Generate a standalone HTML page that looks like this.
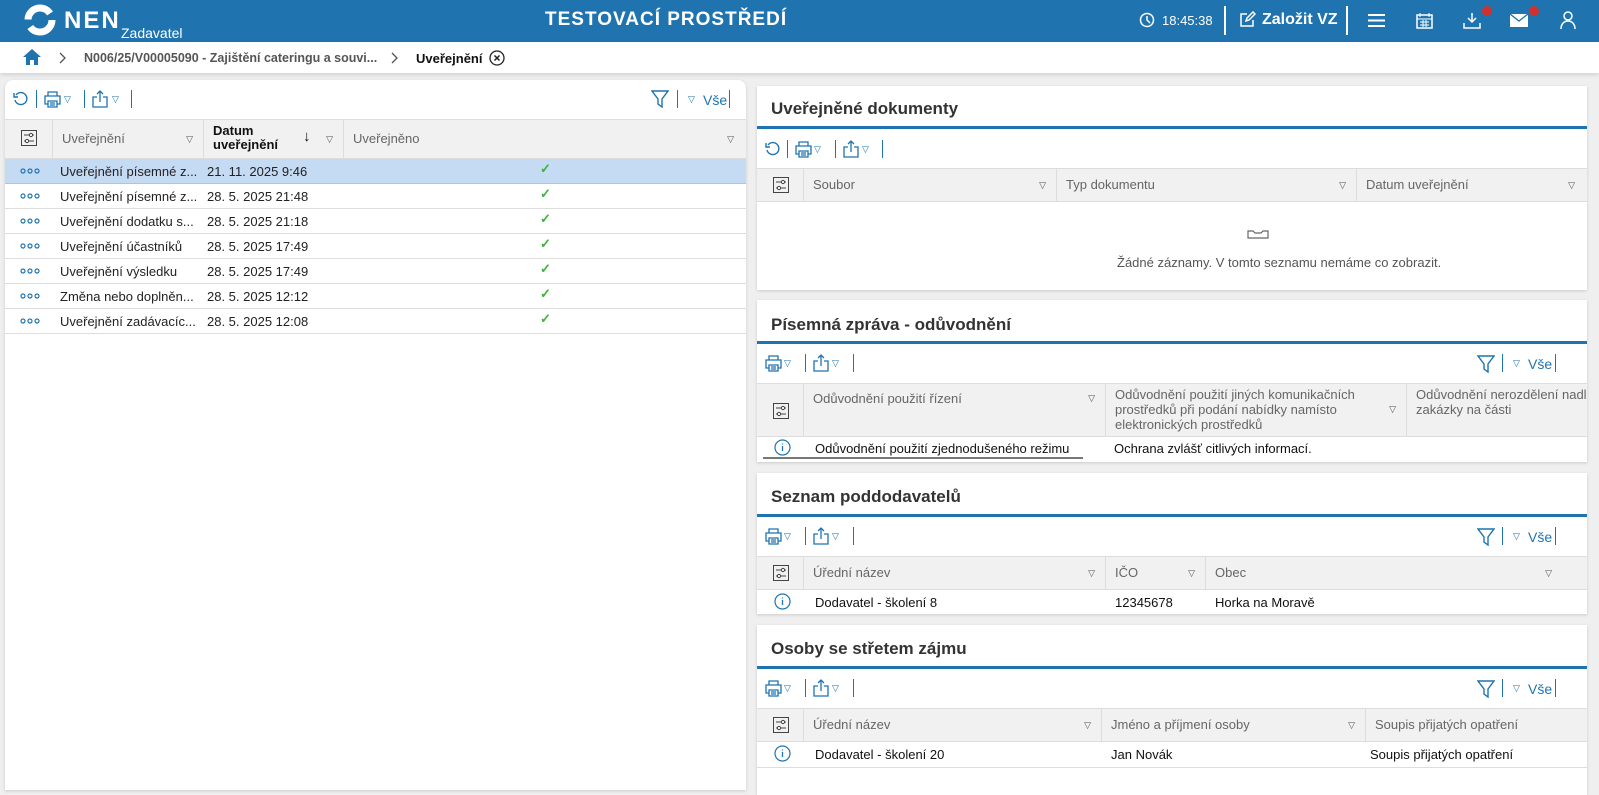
<!DOCTYPE html>
<html><head><meta charset="utf-8">
<style>
*{box-sizing:border-box;margin:0;padding:0}
body{width:1599px;height:784px;overflow:hidden;background:#efefef;font-family:"Liberation Sans",Arial,sans-serif;font-size:13px;color:#222;position:relative}
.a{position:absolute}
.hdr{left:0;top:0;width:1599px;height:42px;background:#1f74b0;color:#fff}
.bc{left:0;top:42px;width:1599px;height:31px;background:#fff;box-shadow:0 2px 4px rgba(0,0,0,.12)}
.panel{background:#fff;box-shadow:0 1px 3px rgba(0,0,0,.15)}
.th{background:#f1f1f1;border-top:1px solid #ddd;border-bottom:1px solid #ddd;color:#666}
.th .c{position:absolute;top:0;bottom:0;border-left:1px solid #ddd;padding-left:9px}
.tri{position:absolute;font-size:9px;color:#555}
.row{border-bottom:1px solid #ddd}
.blue{color:#1f74b0}
.ttl{font-size:17px;font-weight:bold;color:#333}
.bl{height:3px;background:#1f74b0}
.sep{position:absolute;width:1px;height:18px;background:#1f74b0}
.dots{position:absolute;left:15px;top:9px;width:20px;height:6px}
.chk{position:absolute;left:535px;top:2px;color:#3bb33b;font-weight:bold}
</style></head><body>

<div class="a hdr">
 <svg class="a" style="left:24px;top:4px" width="32" height="32" viewBox="0 0 32 32"><circle cx="16" cy="16" r="12" fill="none" stroke="#fff" stroke-width="7" stroke-dasharray="30 8"/></svg>
 <div class="a" style="left:64px;top:7px;font-size:24px;font-weight:bold;letter-spacing:2px">NEN</div>
 <div class="a" style="left:121px;top:25px;font-size:14px">Zadavatel</div>
 <div class="a" style="left:545px;top:9px;font-size:19px;font-weight:bold;letter-spacing:1px">TESTOVACÍ PROSTŘEDÍ</div>
 <svg class="a" style="left:1139px;top:12px" width="16" height="16" viewBox="0 0 16 16"><circle cx="8" cy="8" r="6.5" fill="none" stroke="#fff" stroke-width="1.5"/><path d="M8 4v4l3 3" stroke="#fff" stroke-width="1.5" fill="none"/></svg>
 <div class="a" style="left:1162px;top:13px;font-size:13px">18:45:38</div>
 <div class="a" style="left:1224px;top:6px;width:2px;height:29px;background:#fff"></div>
 <svg class="a" style="left:1238px;top:11px" width="18" height="18" viewBox="0 0 18 18"><path d="M9 3H3v12h12V9M8 10l1-3 6-6 2 2-6 6z" stroke="#fff" stroke-width="1.5" fill="none"/></svg>
 <div class="a" style="left:1262px;top:11px;font-size:16px;font-weight:bold">Založit VZ</div>
 <div class="a" style="left:1346px;top:6px;width:2px;height:29px;background:#fff"></div>
 <svg class="a" style="left:1368px;top:13px" width="17" height="15"><path d="M0 2h17M0 7.5h17M0 13h17" stroke="#fff" stroke-width="2"/></svg>
 <svg class="a" style="left:1416px;top:12px" width="17" height="17" viewBox="0 0 17 17"><rect x="1" y="3" width="15" height="13" fill="none" stroke="#fff" stroke-width="1.5"/><path d="M4 1v4M13 1v4M1 7h15M4 10h9M4 13h9M7 8v7M10 8v7" stroke="#fff" stroke-width="1"/></svg>
 <svg class="a" style="left:1463px;top:12px" width="18" height="17" viewBox="0 0 18 17"><path d="M9 1v9M5 6l4 4 4-4M1 11v5h16v-5" stroke="#fff" stroke-width="1.5" fill="none"/></svg>
 <div class="a" style="left:1482px;top:6px;width:10px;height:10px;border-radius:50%;background:#d0312d"></div>
 <svg class="a" style="left:1510px;top:14px" width="18" height="13" viewBox="0 0 18 13"><rect width="18" height="13" fill="#fff"/><path d="M0 0l9 7 9-7" stroke="#1f74b0" stroke-width="1.3" fill="none"/></svg>
 <div class="a" style="left:1529px;top:6px;width:10px;height:10px;border-radius:50%;background:#d0312d"></div>
 <svg class="a" style="left:1560px;top:11px" width="16" height="18" viewBox="0 0 16 18"><circle cx="8" cy="5" r="4" fill="none" stroke="#fff" stroke-width="1.5"/><path d="M1 18c0-5 3-8 7-8s7 3 7 8" fill="none" stroke="#fff" stroke-width="1.5"/></svg>
</div>

<div class="a bc">
 <svg class="a" style="left:23px;top:7px" width="18" height="16" viewBox="0 0 18 16"><path d="M9 0L0 8h3v8h4v-5h4v5h4V8h3z" fill="#1f74b0"/></svg>
 <svg class="a" style="left:59px;top:10px" width="8" height="12"><path d="M1 1l5 5-5 5" stroke="#555" fill="none" stroke-width="1.3"/></svg>
 <div class="a" style="left:84px;top:9px;font-weight:bold;color:#555;font-size:12.5px">N006/25/V00005090 - Zajištění cateringu a souvi...</div>
 <svg class="a" style="left:391px;top:10px" width="8" height="12"><path d="M1 1l5 5-5 5" stroke="#555" fill="none" stroke-width="1.3"/></svg>
 <div class="a" style="left:416px;top:9px;font-weight:bold;color:#111">Uveřejnění</div>
 <svg class="a" style="left:489px;top:8px" width="16" height="16" viewBox="0 0 16 16"><circle cx="8" cy="8" r="7" fill="none" stroke="#222" stroke-width="1.3"/><path d="M5.5 5.5l5 5M10.5 5.5l-5 5" stroke="#222" stroke-width="1.5"/></svg>
</div>

<!-- Left panel -->
<div class="a panel" style="left:5px;top:80px;width:741px;height:710px;border-radius:8px 8px 0 0">
 <svg class="a" style="left:8px;top:11px" width="16" height="16" viewBox="0 0 16 16"><path d="M3 4A6 6 0 1 1 2 9" fill="none" stroke="#1f74b0" stroke-width="1.4"/><path d="M1 2v4h4" fill="none" stroke="#1f74b0" stroke-width="1.4"/></svg>
 <div class="sep" style="left:31px;top:10px"></div>
 <svg class="a" style="left:39px;top:11px" width="17" height="17" viewBox="0 0 17 17"><path d="M4 5V1h9v4M4 13H1V5h15v8h-3M4 10h9v6H4zM6 12h5M6 14h5" fill="none" stroke="#1f74b0" stroke-width="1.3"/></svg>
 <span class="tri blue" style="left:59px;top:14px">▽</span>
 <div class="sep" style="left:79px;top:10px"></div>
 <svg class="a" style="left:87px;top:10px" width="16" height="18" viewBox="0 0 16 18"><path d="M5 7H1v10h14V7h-4M8 12V1M5 4l3-3 3 3" fill="none" stroke="#1f74b0" stroke-width="1.3"/></svg>
 <span class="tri blue" style="left:107px;top:14px">▽</span>
 <div class="sep" style="left:126px;top:10px"></div>
 <svg class="a" style="left:646px;top:10px" width="18" height="18" viewBox="0 0 18 18"><path d="M1 1h16l-6 8v8l-4-3V9z" fill="none" stroke="#1f74b0" stroke-width="1.4"/></svg>
 <div class="sep" style="left:672px;top:10px"></div>
 <span class="tri blue" style="left:683px;top:14px">▽</span>
 <div class="a blue" style="left:698px;top:12px;font-size:14px">Vše</div>
 <div class="sep" style="left:724px;top:10px"></div>

 <div class="a th" style="left:0;top:39px;width:741px;height:40px">
  <svg class="a" style="left:16px;top:10px" width="16" height="16" viewBox="0 0 16 16"><rect x=".5" y=".5" width="15" height="15" fill="none" stroke="#444"/><path d="M3 5h10M3 11h10" stroke="#444"/><circle cx="10" cy="5" r="1.6" fill="#fff" stroke="#444"/><circle cx="6" cy="11" r="1.6" fill="#fff" stroke="#444"/></svg>
  <div class="c" style="left:47px;width:151px;line-height:38px">Uveřejnění<span class="tri" style="right:10px;top:0">▽</span></div>
  <div class="c" style="left:198px;width:140px;color:#111;font-weight:bold;padding-top:4px;line-height:14px">Datum<br>uveřejnění<span class="a" style="left:99px;top:10px;font-weight:normal;font-size:15px">↓</span><span class="tri" style="right:10px;top:12px;font-weight:normal">▽</span></div>
  <div class="c" style="left:338px;right:0;line-height:38px">Uveřejněno<span class="tri" style="right:12px;top:0">▽</span></div>
 </div>
 <svg width="0" height="0" style="position:absolute"><defs><g id="d"><circle cx="3" cy="3" r="2" fill="none" stroke="#1f74b0" stroke-width="1.2"/><circle cx="10" cy="3" r="2" fill="none" stroke="#1f74b0" stroke-width="1.2"/><circle cx="17" cy="3" r="2" fill="none" stroke="#1f74b0" stroke-width="1.2"/></g></defs></svg>
 <div class="a" style="left:0;top:79px;width:741px">
  <div class="row" style="height:25px;background:#c5daf3;position:relative;border-bottom-color:#a8c4e8"><svg class="dots"><use href="#d"/></svg><span class="a" style="left:55px;top:5px">Uveřejnění písemné z...</span><span class="a" style="left:202px;top:5px">21. 11. 2025 9:46</span><span class="chk">✓</span></div>
  <div class="row" style="height:25px;position:relative"><svg class="dots"><use href="#d"/></svg><span class="a" style="left:55px;top:5px">Uveřejnění písemné z...</span><span class="a" style="left:202px;top:5px">28. 5. 2025 21:48</span><span class="chk">✓</span></div>
  <div class="row" style="height:25px;position:relative"><svg class="dots"><use href="#d"/></svg><span class="a" style="left:55px;top:5px">Uveřejnění dodatku s...</span><span class="a" style="left:202px;top:5px">28. 5. 2025 21:18</span><span class="chk">✓</span></div>
  <div class="row" style="height:25px;position:relative"><svg class="dots"><use href="#d"/></svg><span class="a" style="left:55px;top:5px">Uveřejnění účastníků</span><span class="a" style="left:202px;top:5px">28. 5. 2025 17:49</span><span class="chk">✓</span></div>
  <div class="row" style="height:25px;position:relative"><svg class="dots"><use href="#d"/></svg><span class="a" style="left:55px;top:5px">Uveřejnění výsledku</span><span class="a" style="left:202px;top:5px">28. 5. 2025 17:49</span><span class="chk">✓</span></div>
  <div class="row" style="height:25px;position:relative"><svg class="dots"><use href="#d"/></svg><span class="a" style="left:55px;top:5px">Změna nebo doplněn...</span><span class="a" style="left:202px;top:5px">28. 5. 2025 12:12</span><span class="chk">✓</span></div>
  <div class="row" style="height:25px;position:relative"><svg class="dots"><use href="#d"/></svg><span class="a" style="left:55px;top:5px">Uveřejnění zadávacíc...</span><span class="a" style="left:202px;top:5px">28. 5. 2025 12:08</span><span class="chk">✓</span></div>
 </div>
</div>

<!-- Right panel 1 -->
<div class="a panel" style="left:757px;top:86px;width:830px;height:204px">
 <div class="a ttl" style="left:14px;top:13px">Uveřejněné dokumenty</div>
 <div class="a bl" style="left:0;top:40px;width:830px"></div>
 <svg class="a" style="left:8px;top:55px" width="16" height="16" viewBox="0 0 16 16"><path d="M3 4A6 6 0 1 1 2 9" fill="none" stroke="#1f74b0" stroke-width="1.4"/><path d="M1 2v4h4" fill="none" stroke="#1f74b0" stroke-width="1.4"/></svg>
 <div class="sep" style="left:30px;top:54px"></div>
 <svg class="a" style="left:38px;top:55px" width="17" height="17" viewBox="0 0 17 17"><path d="M4 5V1h9v4M4 13H1V5h15v8h-3M4 10h9v6H4zM6 12h5M6 14h5" fill="none" stroke="#1f74b0" stroke-width="1.3"/></svg>
 <span class="tri blue" style="left:57px;top:58px">▽</span>
 <div class="sep" style="left:78px;top:54px"></div>
 <svg class="a" style="left:86px;top:54px" width="16" height="18" viewBox="0 0 16 18"><path d="M5 7H1v10h14V7h-4M8 12V1M5 4l3-3 3 3" fill="none" stroke="#1f74b0" stroke-width="1.3"/></svg>
 <span class="tri blue" style="left:105px;top:58px">▽</span>
 <div class="sep" style="left:125px;top:54px"></div>
 <div class="a th" style="left:0;top:82px;width:830px;height:34px">
  <svg class="a" style="left:16px;top:8px" width="16" height="16" viewBox="0 0 16 16"><rect x=".5" y=".5" width="15" height="15" fill="none" stroke="#444"/><path d="M3 5h10M3 11h10" stroke="#444"/><circle cx="10" cy="5" r="1.6" fill="#fff" stroke="#444"/><circle cx="6" cy="11" r="1.6" fill="#fff" stroke="#444"/></svg>
  <div class="c" style="left:46px;width:253px;line-height:32px">Soubor<span class="tri" style="right:10px;top:0">▽</span></div>
  <div class="c" style="left:299px;width:300px;line-height:32px">Typ dokumentu<span class="tri" style="right:10px;top:0">▽</span></div>
  <div class="c" style="left:599px;right:0;line-height:32px">Datum uveřejnění<span class="tri" style="right:12px;top:0">▽</span></div>
 </div>
 <svg class="a" style="left:490px;top:144px" width="22" height="9" viewBox="0 0 22 9"><path d="M1 1h5l2 2h6l2-2h5v7H1z" fill="none" stroke="#666" stroke-width="1.2"/></svg>
 <div class="a" style="left:360px;top:169px;color:#555">Žádné záznamy. V tomto seznamu nemáme co zobrazit.</div>
</div>

<!-- Right panel 2 -->
<div class="a panel" style="left:757px;top:300px;width:830px;height:162px">
 <div class="a ttl" style="left:14px;top:15px">Písemná zpráva - odůvodnění</div>
 <div class="a bl" style="left:0;top:41px;width:830px"></div>
 <svg class="a" style="left:8px;top:55px" width="17" height="17" viewBox="0 0 17 17"><path d="M4 5V1h9v4M4 13H1V5h15v8h-3M4 10h9v6H4zM6 12h5M6 14h5" fill="none" stroke="#1f74b0" stroke-width="1.3"/></svg>
 <span class="tri blue" style="left:27px;top:58px">▽</span>
 <div class="sep" style="left:48px;top:54px"></div>
 <svg class="a" style="left:56px;top:54px" width="16" height="18" viewBox="0 0 16 18"><path d="M5 7H1v10h14V7h-4M8 12V1M5 4l3-3 3 3" fill="none" stroke="#1f74b0" stroke-width="1.3"/></svg>
 <span class="tri blue" style="left:75px;top:58px">▽</span>
 <div class="sep" style="left:96px;top:54px"></div>
 <svg class="a" style="left:720px;top:55px" width="18" height="18" viewBox="0 0 18 18"><path d="M1 1h16l-6 8v8l-4-3V9z" fill="none" stroke="#1f74b0" stroke-width="1.4"/></svg>
 <div class="sep" style="left:745px;top:54px"></div>
 <span class="tri blue" style="left:756px;top:58px">▽</span>
 <div class="a blue" style="left:771px;top:56px;font-size:14px">Vše</div>
 <div class="sep" style="left:798px;top:54px"></div>
 <div class="a th" style="left:0;top:83px;width:830px;height:54px">
  <svg class="a" style="left:16px;top:19px" width="16" height="16" viewBox="0 0 16 16"><rect x=".5" y=".5" width="15" height="15" fill="none" stroke="#444"/><path d="M3 5h10M3 11h10" stroke="#444"/><circle cx="10" cy="5" r="1.6" fill="#fff" stroke="#444"/><circle cx="6" cy="11" r="1.6" fill="#fff" stroke="#444"/></svg>
  <div class="c" style="left:46px;width:302px;padding-top:7px">Odůvodnění použití řízení<span class="tri" style="right:10px;top:9px">▽</span></div>
  <div class="c" style="left:348px;width:301px;padding-top:3px;line-height:15px">Odůvodnění použití jiných komunikačních<br>prostředků při podání nabídky namísto<br>elektronických prostředků<span class="tri" style="right:10px;top:18px">▽</span></div>
  <div class="c" style="left:649px;right:0;padding-top:3px;line-height:15px;white-space:nowrap;overflow:hidden">Odůvodnění nerozdělení nadlimitní<br>zakázky na části</div>
 </div>
 <svg class="a" style="left:17px;top:139px" width="17" height="17" viewBox="0 0 17 17"><circle cx="8.5" cy="8.5" r="7.5" fill="#fff" stroke="#1f74b0" stroke-width="1.2"/><path d="M8.5 7v5M8.5 4.5v1" stroke="#1f74b0" stroke-width="1.3"/></svg>
 <div class="a" style="left:58px;top:141px;color:#111">Odůvodnění použití zjednodušeného režimu</div>
 <div class="a" style="left:6px;top:157px;width:320px;height:2px;background:#777"></div>
 <div class="a" style="left:357px;top:141px;color:#111">Ochrana zvlášť citlivých informací.</div>
</div>

<!-- Right panel 3 -->
<div class="a panel" style="left:757px;top:473px;width:830px;height:141px">
 <div class="a ttl" style="left:14px;top:14px">Seznam poddodavatelů</div>
 <div class="a bl" style="left:0;top:41px;width:830px"></div>
 <svg class="a" style="left:8px;top:55px" width="17" height="17" viewBox="0 0 17 17"><path d="M4 5V1h9v4M4 13H1V5h15v8h-3M4 10h9v6H4zM6 12h5M6 14h5" fill="none" stroke="#1f74b0" stroke-width="1.3"/></svg>
 <span class="tri blue" style="left:27px;top:58px">▽</span>
 <div class="sep" style="left:48px;top:54px"></div>
 <svg class="a" style="left:56px;top:54px" width="16" height="18" viewBox="0 0 16 18"><path d="M5 7H1v10h14V7h-4M8 12V1M5 4l3-3 3 3" fill="none" stroke="#1f74b0" stroke-width="1.3"/></svg>
 <span class="tri blue" style="left:75px;top:58px">▽</span>
 <div class="sep" style="left:96px;top:54px"></div>
 <svg class="a" style="left:720px;top:55px" width="18" height="18" viewBox="0 0 18 18"><path d="M1 1h16l-6 8v8l-4-3V9z" fill="none" stroke="#1f74b0" stroke-width="1.4"/></svg>
 <div class="sep" style="left:745px;top:54px"></div>
 <span class="tri blue" style="left:756px;top:58px">▽</span>
 <div class="a blue" style="left:771px;top:56px;font-size:14px">Vše</div>
 <div class="sep" style="left:798px;top:54px"></div>
 <div class="a th" style="left:0;top:83px;width:830px;height:34px">
  <svg class="a" style="left:16px;top:8px" width="16" height="16" viewBox="0 0 16 16"><rect x=".5" y=".5" width="15" height="15" fill="none" stroke="#444"/><path d="M3 5h10M3 11h10" stroke="#444"/><circle cx="10" cy="5" r="1.6" fill="#fff" stroke="#444"/><circle cx="6" cy="11" r="1.6" fill="#fff" stroke="#444"/></svg>
  <div class="c" style="left:46px;width:302px;line-height:32px">Úřední název<span class="tri" style="right:10px;top:0">▽</span></div>
  <div class="c" style="left:348px;width:100px;line-height:32px">IČO<span class="tri" style="right:10px;top:0">▽</span></div>
  <div class="c" style="left:448px;right:0;line-height:32px">Obec<span class="tri" style="right:35px;top:0">▽</span></div>
 </div>
 <svg class="a" style="left:17px;top:120px" width="17" height="17" viewBox="0 0 17 17"><circle cx="8.5" cy="8.5" r="7.5" fill="#fff" stroke="#1f74b0" stroke-width="1.2"/><path d="M8.5 7v5M8.5 4.5v1" stroke="#1f74b0" stroke-width="1.3"/></svg>
 <div class="a" style="left:58px;top:122px;color:#111">Dodavatel - školení 8</div>
 <div class="a" style="left:358px;top:122px;color:#111">12345678</div>
 <div class="a" style="left:458px;top:122px;color:#111">Horka na Moravě</div>
</div>

<!-- Right panel 4 -->
<div class="a panel" style="left:757px;top:625px;width:830px;height:170px">
 <div class="a ttl" style="left:14px;top:14px">Osoby se střetem zájmu</div>
 <div class="a bl" style="left:0;top:41px;width:830px"></div>
 <svg class="a" style="left:8px;top:55px" width="17" height="17" viewBox="0 0 17 17"><path d="M4 5V1h9v4M4 13H1V5h15v8h-3M4 10h9v6H4zM6 12h5M6 14h5" fill="none" stroke="#1f74b0" stroke-width="1.3"/></svg>
 <span class="tri blue" style="left:27px;top:58px">▽</span>
 <div class="sep" style="left:48px;top:54px"></div>
 <svg class="a" style="left:56px;top:54px" width="16" height="18" viewBox="0 0 16 18"><path d="M5 7H1v10h14V7h-4M8 12V1M5 4l3-3 3 3" fill="none" stroke="#1f74b0" stroke-width="1.3"/></svg>
 <span class="tri blue" style="left:75px;top:58px">▽</span>
 <div class="sep" style="left:96px;top:54px"></div>
 <svg class="a" style="left:720px;top:55px" width="18" height="18" viewBox="0 0 18 18"><path d="M1 1h16l-6 8v8l-4-3V9z" fill="none" stroke="#1f74b0" stroke-width="1.4"/></svg>
 <div class="sep" style="left:745px;top:54px"></div>
 <span class="tri blue" style="left:756px;top:58px">▽</span>
 <div class="a blue" style="left:771px;top:56px;font-size:14px">Vše</div>
 <div class="sep" style="left:798px;top:54px"></div>
 <div class="a th" style="left:0;top:83px;width:830px;height:34px">
  <svg class="a" style="left:16px;top:8px" width="16" height="16" viewBox="0 0 16 16"><rect x=".5" y=".5" width="15" height="15" fill="none" stroke="#444"/><path d="M3 5h10M3 11h10" stroke="#444"/><circle cx="10" cy="5" r="1.6" fill="#fff" stroke="#444"/><circle cx="6" cy="11" r="1.6" fill="#fff" stroke="#444"/></svg>
  <div class="c" style="left:46px;width:298px;line-height:32px">Úřední název<span class="tri" style="right:10px;top:0">▽</span></div>
  <div class="c" style="left:344px;width:264px;line-height:32px">Jméno a příjmení osoby<span class="tri" style="right:10px;top:0">▽</span></div>
  <div class="c" style="left:608px;right:0;line-height:32px">Soupis přijatých opatření</div>
 </div>
 <svg class="a" style="left:17px;top:120px" width="17" height="17" viewBox="0 0 17 17"><circle cx="8.5" cy="8.5" r="7.5" fill="#fff" stroke="#1f74b0" stroke-width="1.2"/><path d="M8.5 7v5M8.5 4.5v1" stroke="#1f74b0" stroke-width="1.3"/></svg>
 <div class="a" style="left:58px;top:122px;color:#111">Dodavatel - školení 20</div>
 <div class="a" style="left:354px;top:122px;color:#111">Jan Novák</div>
 <div class="a" style="left:613px;top:122px;color:#111">Soupis přijatých opatření</div>
 <div class="a" style="left:0;top:142px;width:830px;height:1px;background:#ddd"></div>
</div>
</body></html>
